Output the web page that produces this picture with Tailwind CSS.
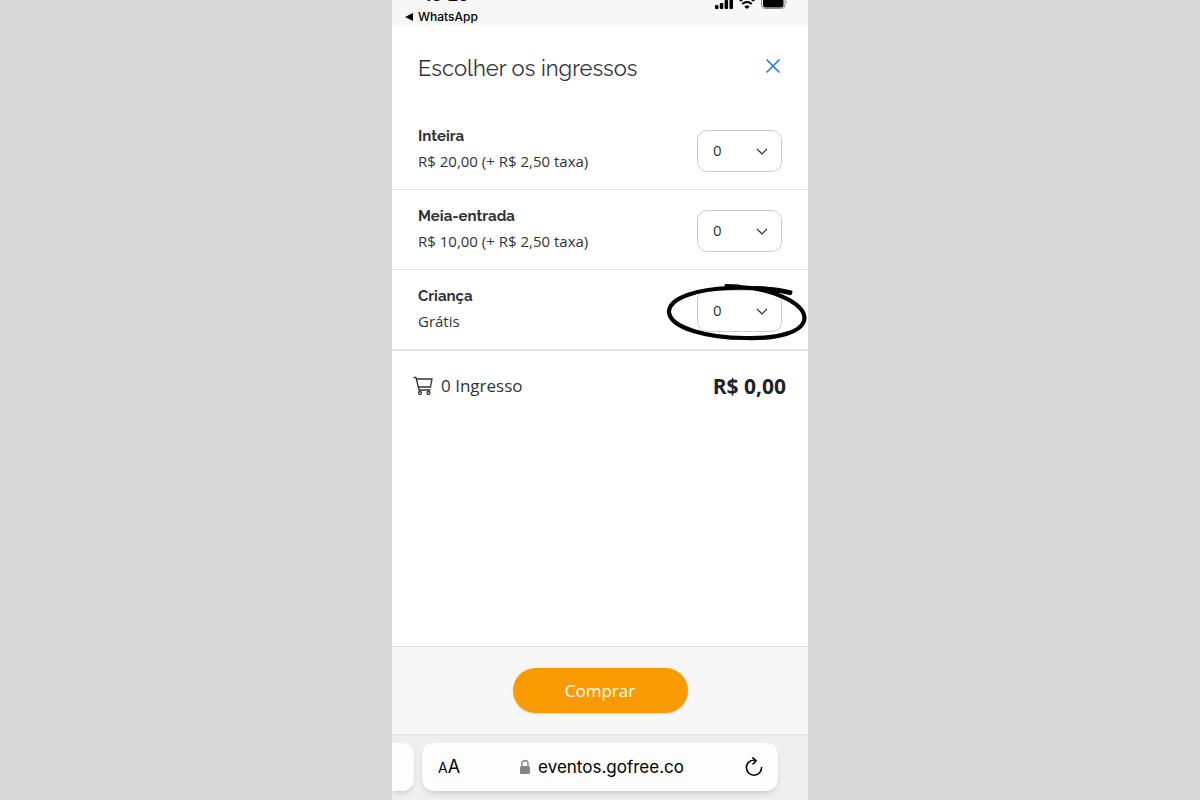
<!DOCTYPE html>
<html lang="pt-BR">
  <head>
    <meta charset="UTF-8" />
    <meta name="viewport" content="width=device-width, initial-scale=1.0" />
    <title>Escolher os ingressos</title>
    <script src="https://cdn.jsdelivr.net/npm/@tailwindcss/browser@4"></script>
  </head>
  <body class="bg-[#d9d9d9] font-['Open_Sans',sans-serif] text-[#303336]">
    <!-- Phone screen -->
    <div class="mx-auto flex min-h-screen max-w-[416px] flex-col bg-white">
      <!-- Status bar, scrolled partly out of view -->
      <header
        class="flex h-[26px] flex-col justify-end overflow-hidden bg-[#f7f7f7] pb-[1px] font-[Inter,sans-serif] text-black"
      >
        <div class="flex shrink-0 items-end justify-between pr-5 pl-8">
          <span class="pb-1.5 text-[17px] leading-4 font-semibold">16:26</span>
          <div class="flex items-end gap-1.5">
            <svg class="h-3 w-[18px]" viewBox="0 0 18 12" aria-hidden="true">
              <rect x="0" y="8" width="3.500" height="4" rx="1" />
              <rect x="4.800" y="6" width="3.500" height="6" rx="1" />
              <rect x="9.600" y="3" width="3.500" height="9" rx="1" />
              <rect x="14.500" y="0" width="3.500" height="12" rx="1" />
            </svg>
            <svg class="h-3 w-4" viewBox="0 0 16 12" fill="none" stroke="#000" stroke-width="2.200" aria-hidden="true">
              <path d="M1 4C5 0 11 0 15 4M3.300 7C6 4.300 10 4.300 12.700 7" />
              <path d="M8 12L5.300 9.500Q8 7.500 10.700 9.500Z" fill="#000" stroke="none" />
            </svg>
            <svg class="h-[13px] w-[27px]" viewBox="0 0 27 13" aria-hidden="true">
              <rect x="0.500" y="0.500" width="23.500" height="12" rx="3.500" fill="none" stroke="#8d8d8d" />
              <rect x="2" y="1.500" width="20.500" height="10" rx="2.500" />
              <path d="M25.500 4.500Q27 6 25.500 8Z" fill="#777" />
            </svg>
          </div>
        </div>
        <a href="#" class="flex shrink-0 items-center gap-1 pl-3 text-xs leading-4 font-medium">
          <svg class="size-[10px]" viewBox="0 0 10 10" aria-hidden="true">
            <path d="M1 5L9 1V9Z" />
          </svg>
          WhatsApp
        </a>
      </header>

      <main class="grow">
        <div class="flex h-[84px] items-center justify-between px-[26px]">
          <h1 class="font-[Raleway,Lato,sans-serif] text-[22px] leading-7">
            Escolher os ingressos
          </h1>
          <button type="button" aria-label="Fechar" class="mb-1">
            <svg class="size-[18px]" viewBox="0 0 18 18" fill="none" stroke="#1b78e0" stroke-width="1.500">
              <path d="M2.500 2.500L15.500 15.500M15.500 2.500L2.500 15.500" />
            </svg>
          </button>
        </div>

        <!-- Ticket types -->
        <ul>
          <li class="flex h-20 items-center justify-between border-b border-[#e4e4e4] px-[26px]">
            <label for="inteira" class="flex flex-col gap-[3px] pb-[3px] text-[15px] leading-[22px]">
              <span class="font-[Raleway,Lato,sans-serif] font-bold">Inteira</span>
              <span>R$ 20,00 (+ R$ 2,50 taxa)</span>
            </label>
            <div class="relative mt-[3px]">
              <select
                id="inteira"
                class="block h-[42px] w-[85px] appearance-none rounded-[10px] border border-[#cdcdcd] bg-white pb-[2px] pl-[15px] text-[15px]"
              >
                <option>0</option>
                <option>1</option>
                <option>2</option>
              </select>
              <svg class="pointer-events-none absolute top-4 right-[14px] size-3" viewBox="0 0 12 12" fill="none" stroke="#303336" stroke-width="1.200">
                <path d="M1 3L6 8L11 3" />
              </svg>
            </div>
          </li>
          <li class="flex h-20 items-center justify-between border-b border-[#e4e4e4] px-[26px]">
            <label for="meia" class="flex flex-col gap-[3px] pb-[3px] text-[15px] leading-[22px]">
              <span class="font-[Raleway,Lato,sans-serif] font-bold">Meia-entrada</span>
              <span>R$ 10,00 (+ R$ 2,50 taxa)</span>
            </label>
            <div class="relative mt-[3px]">
              <select
                id="meia"
                class="block h-[42px] w-[85px] appearance-none rounded-[10px] border border-[#cdcdcd] bg-white pb-[2px] pl-[15px] text-[15px]"
              >
                <option>0</option>
                <option>1</option>
                <option>2</option>
              </select>
              <svg class="pointer-events-none absolute top-4 right-[14px] size-3" viewBox="0 0 12 12" fill="none" stroke="#303336" stroke-width="1.200">
                <path d="M1 3L6 8L11 3" />
              </svg>
            </div>
          </li>
          <li class="flex h-[81px] items-center justify-between border-b-2 border-[#e4e4e4] px-[26px]">
            <label for="crianca" class="flex flex-col gap-[3px] pb-[3px] text-[15px] leading-[22px]">
              <span class="font-[Raleway,Lato,sans-serif] font-bold">Criança</span>
              <span>Grátis</span>
            </label>
            <div class="relative mt-[3px]">
              <select
                id="crianca"
                class="block h-[42px] w-[85px] appearance-none rounded-[10px] border border-[#cdcdcd] bg-white pb-[2px] pl-[15px] text-[15px]"
              >
                <option>0</option>
                <option>1</option>
                <option>2</option>
              </select>
              <svg class="pointer-events-none absolute top-4 right-[14px] size-3" viewBox="0 0 12 12" fill="none" stroke="#303336" stroke-width="1.200">
                <path d="M1 3L6 8L11 3" />
              </svg>
              <!-- Hand-drawn circle -->
              <svg
                class="pointer-events-none absolute -top-[10px] -left-8 h-[62px] w-[144px] max-w-none"
                viewBox="0 0 144 62"
                fill="none"
                stroke="#000"
                stroke-linecap="round"
                aria-hidden="true"
              >
                <path
                  stroke-width="4.200"
                  d="M125 13C110 9 85 7 64 8C35 9 4 17 4 32C5 48 43 58 80 58C113 59 139 52 139.500 38C139 22 104 8 74 7"
                />
                <path stroke-width="3" d="M61 5.500L74 6M90 7.500C106 8 118 10 126 12M97 10L112 14" />
              </svg>
            </div>
          </li>
        </ul>

        <!-- Cart total -->
        <div class="flex h-[70px] items-center justify-between pr-[22px] pl-[21px]">
          <p class="flex items-center gap-2 text-[17px] leading-6">
            <svg class="size-5" viewBox="0 0 20 20" fill="none" stroke="#303336" stroke-width="1.300" aria-hidden="true">
              <path d="M0.500 1.500H3L6 14H17.500M3.300 3H19L17.500 11H5.400" />
              <circle cx="7" cy="17" r="1.500" />
              <circle cx="15.500" cy="17" r="1.500" />
            </svg>
            0 Ingresso
          </p>
          <strong class="text-[21px] leading-6 font-bold text-[#202326]">R$ 0,00</strong>
        </div>
      </main>

      <div class="flex h-[88px] items-center justify-center border-t border-[#e2e2e2] bg-[#f7f7f7]">
        <button
          type="button"
          class="h-[45px] w-[175px] rounded-full bg-[#f99b00] text-[17px] text-white shadow-sm"
        >
          Comprar
        </button>
      </div>

      <!-- Browser bar -->
      <nav
        class="flex h-[66px] gap-2 overflow-hidden border-t-2 border-[#e6e6e6] bg-[#efefef] pt-[7px] pr-[30px] font-[Inter,sans-serif] text-black"
      >
        <div class="h-12 w-[22px] rounded-r-xl bg-[#fdfdfd] shadow-md"></div>
        <div class="flex h-12 grow items-center justify-between rounded-xl bg-[#fdfdfd] pr-[14px] pl-4 shadow-md">
          <button type="button" aria-label="Tamanho do texto" class="text-lg leading-6">
            <span class="text-sm">A</span>A
          </button>
          <a href="#" class="flex items-center gap-2 text-[17px] leading-6">
            <svg class="h-4 w-[10px]" viewBox="0 0 10 16" fill="#858585" aria-hidden="true">
              <rect y="7" width="10" height="8" rx="1.500" />
              <path d="M2 7V4.500C2 0.500 8 0.500 8 4.500V7" fill="none" stroke="#858585" stroke-width="1.300" />
            </svg>
            eventos.gofree.co
          </a>
          <button type="button" aria-label="Recarregar">
            <svg class="size-5" viewBox="0 0 20 20" fill="none" stroke="#000" stroke-width="1.600" stroke-linecap="round">
              <path d="M11.500 3.500C6.500 2.200 2.400 6.200 2.400 10.600C2.400 14.800 5.800 18.200 10 18.200C14.200 18.200 17.600 14.800 17.600 10.600" />
              <path d="M9 0.800L12.200 3.800L9 7" stroke-linejoin="round" />
            </svg>
          </button>
        </div>
      </nav>
    </div>
  </body>
</html>
